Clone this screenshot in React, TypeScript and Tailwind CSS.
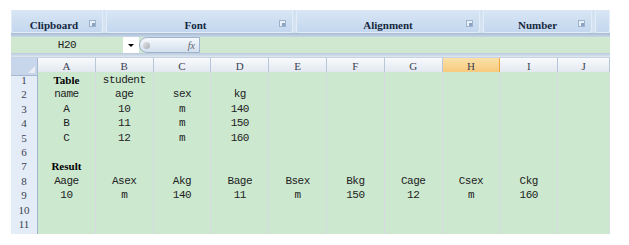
const cols = ["A", "B", "C", "D", "E", "F", "G", "H", "I", "J"];

type Cell = { v: string; b?: boolean };

const rows: Cell[][] = [
  [{ v: "Table", b: true }, { v: "student" }],
  [{ v: "name" }, { v: "age" }, { v: "sex" }, { v: "kg" }],
  [{ v: "A" }, { v: "10" }, { v: "m" }, { v: "140" }],
  [{ v: "B" }, { v: "11" }, { v: "m" }, { v: "150" }],
  [{ v: "C" }, { v: "12" }, { v: "m" }, { v: "160" }],
  [],
  [{ v: "Result", b: true }],
  ["Aage", "Asex", "Akg", "Bage", "Bsex", "Bkg", "Cage", "Csex", "Ckg"].map((v) => ({ v })),
  ["10", "m", "140", "11", "m", "150", "12", "m", "160"].map((v) => ({ v })),
  [],
  [],
  [],
];

const mono = "font-['Liberation_Mono',monospace] text-[11px] tracking-[-0.5px] text-[#222]";
const grid = "grid grid-cols-[27px_repeat(9,57.8px)_1fr]";

const Launcher = () => (
  <span className="absolute right-[6px] top-[10px] w-[7px] h-[7px] border border-[#9db3cd] bg-[#e9f0f8] flex items-end justify-end">
    <span className="w-[3px] h-[3px] bg-[#8aa3c0]" />
  </span>
);

const Group = ({ label, w, pad = "" }: { label: string; w: string; pad?: string }) => (
  <div className={`relative ${w} h-full rounded-b-[3px] border border-t-0 border-[#e3ecf7] bg-gradient-to-b from-[#d9e6f5] to-[#c3d7ee] flex items-center justify-center ${pad}`}>
    <span className="font-['Liberation_Serif',serif] font-bold text-[11px] text-[#15283f] mt-[8px]">{label}</span>
    <Launcher />
  </div>
);

export default function App() {
  return (
    <div className="w-[629px] h-[245px] bg-white pt-[10px] pl-[11px]">
      <div className="w-[599px] flex flex-col">
        {/* ribbon group labels */}
        <div className="h-[23px] flex gap-[3px] bg-[#d4e2f2] overflow-hidden">
          <Group label="Clipboard" w="w-[92px]" pad="pr-[6px]" />
          <Group label="Font" w="w-[187px]" pad="pr-[8px]" />
          <Group label="Alignment" w="w-[184px]" />
          <Group label="Number" w="w-[109px]" />
          <div className="flex-1 h-full rounded-b-[3px] border border-t-0 border-[#e3ecf7] bg-gradient-to-b from-[#d9e6f5] to-[#c3d7ee]" />
        </div>
        <div className="h-[4px] bg-gradient-to-b from-[#a7bbd3] to-[#c9d7e8]" />

        {/* formula bar */}
        <div className="h-[16px] flex bg-[#cfe8cf]">
          <div className={`w-[112px] flex items-center justify-center ${mono}`}>H20</div>
          <div className="w-[16px] bg-white flex items-center justify-center">
            <span className="w-0 h-0 border-l-[3px] border-r-[3px] border-t-[3px] border-l-transparent border-r-transparent border-t-black" />
          </div>
          <div className="w-[61px] h-full rounded-l-full border border-[#9fb4cd] bg-gradient-to-b from-[#f6f9fc] to-[#d3dfed] flex items-center justify-between pl-[3px] pr-[4px]">
            <span className="w-[7px] h-[7px] rounded-full bg-gradient-to-br from-[#e4e6e9] to-[#a9afb6]" />
            <span className="font-['Liberation_Serif',serif] italic text-[10px] text-[#5b6470]">fx</span>
          </div>
          <div className="flex-1" />
        </div>
        <div className="h-[5px] bg-gradient-to-b from-[#b9c9dc] to-[#dfe7f1] border-b border-[#c6d3e3]" />

        {/* sheet */}
        <div className="h-[176px] overflow-hidden">
          <div className={`${grid} h-[14px]`}>
            <div className="bg-[#c7d6ea] border-r border-b border-[#a4b8d0] relative">
              <span className="absolute right-[2px] bottom-[2px] w-0 h-0 border-b-[7px] border-l-[7px] border-b-[#e9eef5] border-l-transparent" />
            </div>
            {cols.map((c) => (
              <div
                key={c}
                className={`flex items-center justify-center border-b border-r ${
                  c === "H"
                    ? "bg-gradient-to-b from-[#fbe0a8] to-[#f6c675] border-[#f0a63a]"
                    : "bg-gradient-to-b from-[#f8fafc] to-[#dfe5ee] border-[#b7c6d8]"
                } font-['Liberation_Serif',serif] text-[11px] text-[#3a4250]`}
              >
                {c}
              </div>
            ))}
          </div>
          {rows.map((r, i) => (
            <div key={i} className={`${grid} h-[14.4px]`}>
              <div className="bg-[#e4ecf7] border-r border-b border-r-[#9fb5cf] border-b-[#c5d3e4] flex items-center justify-center font-['Liberation_Serif',serif] text-[11px] text-[#3a4250]">
                {i < 11 ? i + 1 : ""}
              </div>
              {cols.map((c, j) => {
                const cell = r[j];
                return (
                  <div
                    key={c}
                    className={`bg-[#cce8cf] border-r border-b border-[#d6dbe2] flex items-center justify-center ${
                      cell?.b
                        ? "font-['Liberation_Serif',serif] font-bold text-[11px] text-black"
                        : mono
                    }`}
                  >
                    {cell?.v}
                  </div>
                );
              })}
            </div>
          ))}
        </div>
      </div>
    </div>
  );
}
